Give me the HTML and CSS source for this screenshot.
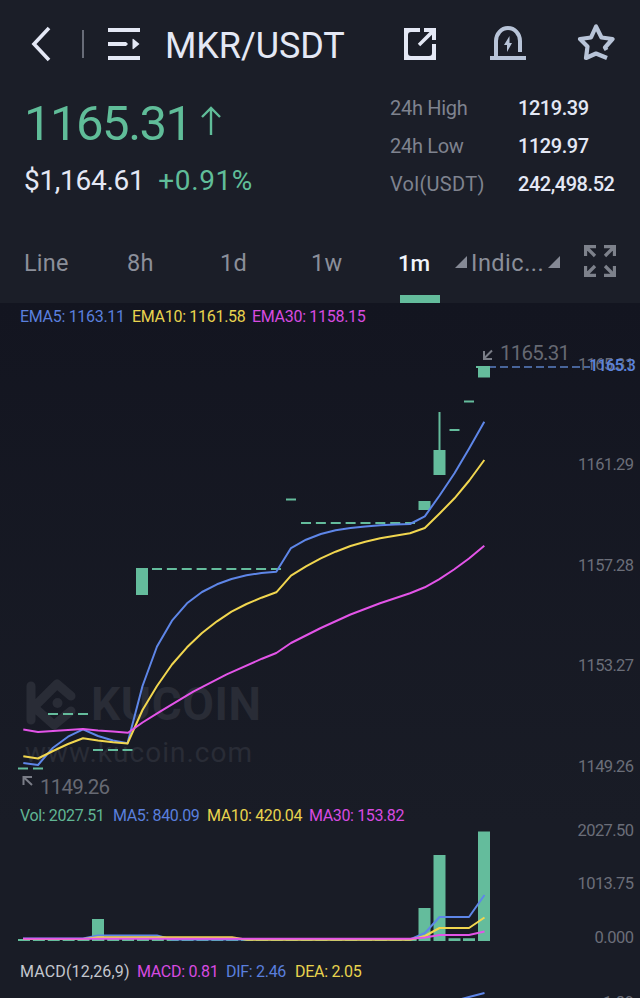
FILE: index.html
```html
<!DOCTYPE html>
<html lang="en">
<head>
<meta charset="utf-8">
<title>MKR/USDT</title>
<link rel="stylesheet" href="styles.css">
</head>
<body>
<main class="app">
  <header class="top">
    <nav class="bar">
      <svg class="back" width="24" height="36" viewBox="0 0 24 36"><path d="M21 2L6 18L21 34" fill="none" stroke="currentColor" stroke-width="3.600"/></svg>
      <span class="divider"></span>
      <svg class="menu" width="32" height="32" viewBox="0 0 32 32" fill="currentColor"><path d="M0 0H32V4H0ZM0 14H18L20 16L18 18H0ZM0 28H32V32H0ZM24.500 11.500Q24.500 10.500 25.500 11L31.500 16L25.500 21Q24.500 21.500 24.500 20.500Z"/></svg>
      <h1 class="pair">MKR/USDT</h1>
      <div class="actions">
        <svg class="share" width="32" height="32" viewBox="0 0 32 32"><path d="M16 0H0V32H32V16H28V25Q28 28 25 28H7Q4 28 4 25V7Q4 4 7 4H16ZM20 0H32V12H28V6.800L16.200 18.200L13.800 15.800L25.500 4H20Z" fill="currentColor"/></svg>
        <svg class="soft" width="36" height="36" viewBox="0 0 36 36"><path d="M6 31V15A12 13 0 0 1 30 15V26M0 32H36" fill="none" stroke="currentColor" stroke-width="4"/><path d="M19.500 10L14 19H17V26L22 17H19.500Z" fill="currentColor"/></svg>
        <svg class="soft star" width="38" height="38" viewBox="0 0 38 38"><path d="M29.500 27L28 24.500L35.500 16L24.500 14.500L19 3.500L14 14.500L3 16L10.500 23.500L9 35L19 30.500L30 35" fill="none" stroke="currentColor" stroke-width="4.200" stroke-linejoin="round"/></svg>
      </div>
    </nav>
    <section class="summary">
      <div class="quote">
        <div class="price"><span>1165.31</span><svg width="20" height="30" viewBox="0 0 20 30"><path d="M10 29V2M1 11L10 2L19 11" fill="none" stroke="currentColor" stroke-width="2.400"/></svg></div>
        <div class="fiat"><span class="usd">$1,164.61</span><span class="change">+0.91%</span></div>
      </div>
      <dl class="stats">
        <dt class="high">24h High</dt><dd>1219.39</dd>
        <dt class="low">24h Low</dt><dd>1129.97</dd>
        <dt class="volume">Vol(USDT)</dt><dd>242,498.52</dd>
      </dl>
    </section>
    <nav class="tabs">
      <span>Line</span><span>8h</span><span>1d</span><span>1w</span><span class="active">1m</span>
      <svg class="tri" width="12" height="12" viewBox="0 0 12 12"><path d="M12 0V12H0Z" fill="currentColor"/></svg>
      <span class="indic">Indic...</span>
      <svg class="tri" width="12" height="12" viewBox="0 0 12 12"><path d="M12 0V12H0Z" fill="currentColor"/></svg>
      <svg class="expand" width="32" height="32" viewBox="0 0 32 32"><path d="M1.500 11V1.500H12M2 2L11 11M20 1.500H30.500V11M30 2L21 11M1.500 21V30.500H12M2 30L11 21M20 30.500H30.500V21M30 30L21 21" fill="none" stroke="currentColor" stroke-width="3.300"/></svg>
    </nav>
  </header>

  <section class="charts">
    <div class="legend ema"><span class="blue">EMA5: 1163.11</span><span class="yellow">EMA10: 1161.58</span><span class="pink">EMA30: 1158.15</span></div>
    <svg class="plot" width="640" height="472" viewBox="0 330 640 472">
      <g class="mark">
        <path d="M31 686V720M34 707L57 684L71 696M35 708L54 725L71 711" fill="none" stroke="currentColor" stroke-width="9" stroke-linecap="round" stroke-linejoin="round"/>
        <circle cx="57.500" cy="703" r="5" fill="currentColor"/>
        <text class="brand" x="91" y="720" textLength="170">KUCOIN</text>
        <text class="site" x="25" y="762" textLength="227">www.kucoin.com</text>
      </g>
      <g class="axis">
        <text x="578" y="370" textLength="56">1165.31</text>
        <text x="578" y="470" textLength="56">1161.29</text>
        <text x="578" y="571" textLength="56">1157.28</text>
        <text x="578" y="671" textLength="56">1153.27</text>
        <text x="578" y="771.500" textLength="56">1149.26</text>
      </g>
      <path d="M488 367H590" fill="none" stroke="#48659b" stroke-width="2" stroke-dasharray="8 4"/>
      <text class="current" x="589" y="371" textLength="47">1165.3</text>
      <g class="candles">
        <path d="M18 768.500h10M33 768.500h10M48 714h10M63 714h10M78 714h10M93 750h10M108 750h10M122.500 750h10M286 499.500h10M449.500 430h10M464 401.500h10M476 367h14"/>
        <path d="M152 569H281" stroke-dasharray="10 4.870"/>
        <path d="M301 523H415" stroke-dasharray="10 4.870"/>
        <path d="M439.500 412V450"/>
        <path class="solid" d="M136 568h12v27h-12ZM418.500 501h12v9h-12ZM433.500 450h12v25h-12ZM478 366h12v11.500h-12Z"/>
      </g>
      <g class="lines">
        <polyline class="blue" points="23.300,763 38,765 53,747.700 68,736.700 83,729.300 98,736 113,740.500 127.500,743.300 142.500,686 157,646.500 172,620.700 187,603.300 202,592 217,584.300 231.500,579 246.500,575.300 261.500,573 276.300,571.700 291,548 306,539.700 320.800,534 335.600,530.300 350.500,528 365.300,526.500 380.200,525.300 395,524.600 410,524 424.800,516.300 439.600,495.500 454.500,473.300 469.300,448.300 484.300,421.700"/>
        <polyline class="yellow" points="23.300,756.300 38,758.500 53,751 68,744 83,738.300 98,740.500 113,742.300 127.500,743.500 142.500,710 157,686 172,664.500 187,647.300 202,633 217,621.300 231.500,611.700 246.500,604 261.500,597.700 276.300,592.300 291,575.700 306,566.300 320.800,558.300 335.600,551.700 350.500,546 365.300,541.700 380.200,538.300 395,535.700 410,533.300 424.800,528 439.600,513.500 454.500,498.300 469.300,480.500 484.300,460"/>
        <polyline class="pink" points="23.300,729.500 38,732 53,731 68,730 83,729 98,730.500 113,731.500 128,732.800 142.500,722.500 160,711.700 193.300,691.700 226.700,674.300 262,658.700 276.300,653 291,643 320.800,628 350.500,614.500 380,603.300 410,593.300 424.800,587.300 439,579.300 454,569.500 469,558.500 484.300,545.700"/>
      </g>
      <g class="extreme">
        <path d="M492 350.500L484 358.500M484 351V359H492M32 785L24 777.500M23.500 785V777H32"/>
        <text x="500" y="360" textLength="70">1165.31</text>
        <text x="40" y="793.500" textLength="70">1149.26</text>
      </g>
    </svg>
    <div class="legend vol"><span class="green">Vol: 2027.51</span><span class="blue">MA5: 840.09</span><span class="yellow">MA10: 420.04</span><span class="pink">MA30: 153.82</span></div>
    <svg class="plot" width="640" height="130" viewBox="0 828 640 130">
      <g class="candles">
        <path d="M18 940H417" stroke-dasharray="12 2.870"/>
        <path class="solid" d="M92 919h12v22h-12ZM418.500 908h12v33h-12ZM433.500 855h12v86h-12ZM448.500 938.300h12v2.700h-12ZM463 938.300h12v2.700h-12ZM478 831.500h12v109.500h-12Z"/>
      </g>
      <g class="lines">
        <polyline class="blue" points="23,938.500 83,938.500 98,935.500 157,935.500 172,939.500 410,939.500 425,933 439.500,917 469,917 484.500,895"/>
        <polyline class="yellow" points="23,939 83,939 98,937.300 232,937.300 247,939.700 410,939.700 425,936 439.500,928 469,928 484.500,917.500"/>
        <polyline class="pink" points="23,938.700 410,938.700 425,937.500 439.500,935 469,935 484.500,931.500"/>
      </g>
      <g class="axis">
        <text x="577.500" y="835.500" textLength="56.500">2027.50</text>
        <text x="577.500" y="889" textLength="56.500">1013.75</text>
        <text x="594.500" y="942.500" textLength="39.500">0.000</text>
      </g>
    </svg>
    <div class="legend macd"><span class="light">MACD(12,26,9)</span><span class="pink">MACD: 0.81</span><span class="blue">DIF: 2.46</span><span class="yellow">DEA: 2.05</span></div>
    <svg class="plot" width="640" height="14" viewBox="0 984 640 14">
      <g class="lines"><polyline class="blue" points="454,1001 469,997 484.500,993"/></g>
      <g class="axis"><text x="603" y="1007.500" textLength="31">1.89</text></g>
    </svg>
  </section>
</main>
</body>
</html>
```

FILE: styles.css
```css
* { box-sizing: border-box; }
body {
  margin: 0;
  background: #191c26;
  color: #e4e8f5;
  font-family: Roboto, "Liberation Sans", sans-serif;
}
svg { display: block; flex: none; }
.plot { overflow: visible; }
.app { width: 640px; height: 998px; overflow: hidden; }
.top { height: 303px; background: #1b1e28; display: flex; flex-direction: column; }

.bar { height: 90px; display: flex; align-items: center; padding: 0 25px 2px 28px; }
.divider { width: 2px; height: 28px; margin-left: 30px; background: #686c78; }
.menu { margin-left: 24px; }
.pair { margin: 4px 0 0 25px; font-size: 36px; font-weight: 400; line-height: 44px; letter-spacing: -0.100px; white-space: nowrap; }
.actions { display: flex; align-items: center; gap: 50px; margin-left: auto; }
.share { margin-right: 4px; }
.soft { color: #b8c4d8; }
.star { margin: -4px 0 0 1px; }

.summary { height: 132px; display: flex; justify-content: space-between; padding: 0 24px; }
.quote { padding-top: 5px; }
.price { display: flex; align-items: flex-start; height: 60px; color: #60bd99; font-size: 49px; line-height: 58px; letter-spacing: -1.500px; }
.price svg { margin: 11px 0 0 9px; }
.fiat { display: flex; gap: 14px; margin-top: 9px; font-size: 28px; line-height: 34px; }
.usd { letter-spacing: -0.300px; }
.change { color: #60bd99; letter-spacing: 0.600px; }
.stats { display: grid; grid-template-columns: 128px 98px; grid-auto-rows: 38px; align-content: start; margin: 0; font-size: 20px; line-height: 37px; white-space: nowrap; }
.stats dt { color: #7f838f; letter-spacing: -0.300px; }
.stats .volume { letter-spacing: 0.300px; }
.stats dd { margin: 0; font-weight: 500; letter-spacing: -0.450px; }

.tabs { height: 81px; display: grid; grid-template-columns: 103px 93px 91px 87px 57px 16px 77px 36px 32px; align-items: center; padding-left: 24px; color: #8b8f9a; font-size: 23.500px; letter-spacing: 0.200px; }
.tabs span { line-height: 83px; height: 81px; }
.tabs .active { color: #f1f4fb; font-weight: 500; font-size: 22.500px; letter-spacing: -0.200px; display: flex; flex-direction: column; }
.active::after { content: ""; width: 40px; height: 8px; margin: -10px 0 0 2px; background: #64bc9c; flex: none; }
.tabs .indic { letter-spacing: 0.500px; }
.expand { margin-top: -3px; color: #7d818b; }
.tri { color: #858995; margin-top: -2px; }

.charts { height: 695px; background: linear-gradient(#131520, #191c26 75%); }
.legend { display: grid; font-size: 16px; line-height: 27px; letter-spacing: -0.300px; white-space: nowrap; padding-left: 20px; }
.ema { height: 27px; grid-template-columns: 112px 120px 120px; }
.vol { height: 26px; grid-template-columns: 93px 94px 102px 100px; line-height: 28px; letter-spacing: -0.370px; }
.macd { height: 26px; grid-template-columns: 117px 89px 69px 80px; }
.legend .blue { color: #5a7fdd; }
.legend .yellow { color: #e8d34e; }
.legend .pink { color: #d74be0; }
.legend .green { color: #60b594; }
.legend .light { color: #c4c7ce; letter-spacing: 0.150px; }

.mark { color: #292c36; fill: #292c36; }
.brand { font-size: 46px; font-weight: 700; }
.site { font-size: 28px; }
.axis { fill: #6b6e79; font-size: 16.500px; }
.current { fill: #5b83dc; font-size: 16.500px; font-weight: 500; }
.candles { stroke: #64bc9c; stroke-width: 2; fill: none; }
.candles .solid { fill: #64bc9c; stroke: none; }
.lines { fill: none; stroke-width: 2; stroke-linejoin: round; }
.lines .blue { stroke: #5e86e8; }
.lines .yellow { stroke: #f1d64f; }
.lines .pink { stroke: #e354e8; }
.extreme { fill: #666973; font-size: 20.500px; }
.extreme path { fill: none; stroke: #7a7d87; stroke-width: 2; }
```
